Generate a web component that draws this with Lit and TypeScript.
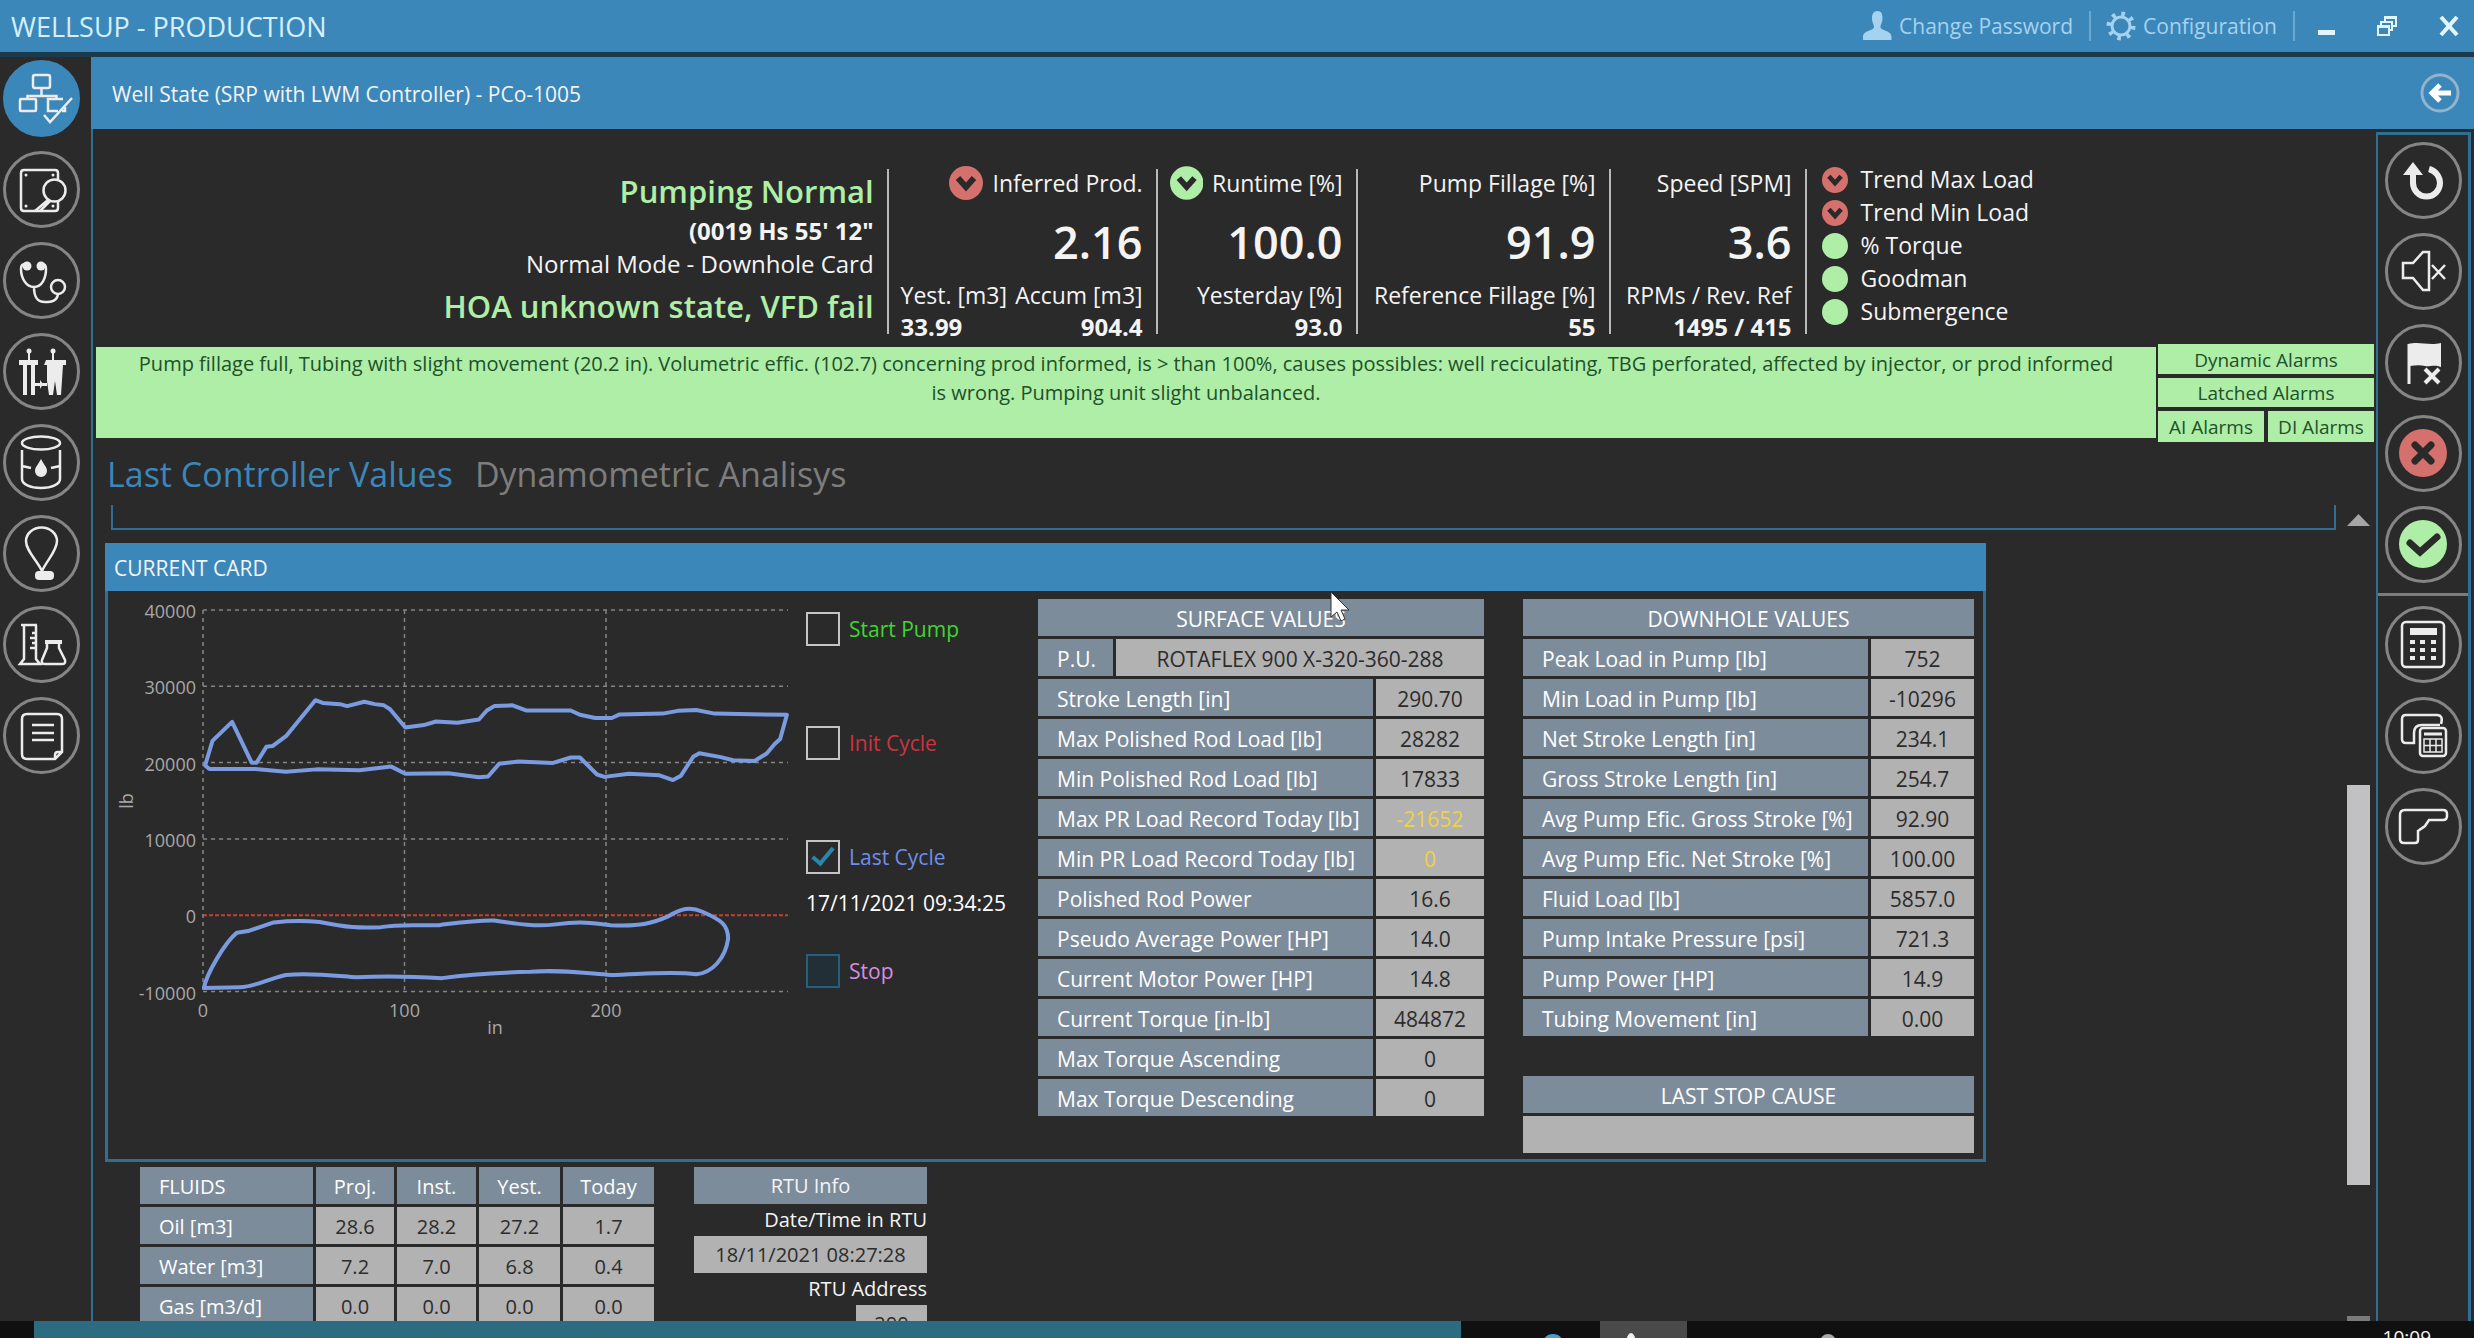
import { LitElement, html, svg, css, TemplateResult } from "lit";
import { customElement } from "lit/decorators.js";
import { classMap } from "lit/directives/class-map.js";

type Icon = { label: string; art: TemplateResult; active?: boolean };
type Row = { label: string; value: string; warn?: boolean };

const NAV: Icon[] = [
  {
    label: "Well state",
    active: true,
    art: svg`<rect x="30" y="15" width="17" height="13" rx="2"/><path d="M38.500 28v8M24.500 39v-3h29v3M38.500 32v4"/>
      <rect x="17" y="39" width="16" height="12" rx="1"/><path d="M60 39H45v12h10M62 47v4h-3"/><path d="M41 55l6 7 22-24"/>`,
  },
  {
    label: "Inspect",
    art: svg`<path d="M55 28v-6q0-3-3-3H21q-3 0-3 3v35q0 3 3 3h31q3 0 3-3v-7"/><circle cx="51.500" cy="39.500" r="11"/>
      <path d="M45 49L32 60M37 60l10-10"/><g class="fill"><circle cx="23" cy="24" r="1.500"/><circle cx="50" cy="24" r="1.500"/><circle cx="23" cy="55" r="1.500"/><circle cx="50" cy="55" r="1.500"/></g>`,
  },
  {
    label: "Diagnosis",
    art: svg`<g class="fill"><circle cx="24" cy="24" r="4.500"/><circle cx="38" cy="24" r="4.500"/></g>
      <path d="M22 22q-4 0-4 5c0 9 5 18 13 18s12-9 12-18q0-5-4-5M31 45c0 10 3 15 11 15 7 0 12-1 13-8"/><circle cx="55" cy="45" r="7"/>`,
  },
  {
    label: "Wells",
    art: svg`<g class="fill"><path d="M16 27h19v5h-3v30h-4V32h-4v30h-4V32h-4zM43 27h20v5h-3l-2 30h-4l-2-14-2 14h-4l-2-14V32h-3z"/>
      <circle cx="26" cy="18" r="2.500"/><circle cx="50" cy="18" r="2.500"/><path d="M25 18h2v9h-2zM49 18h2v28h-2zM32 50h12v3H32zM37 47l3 4-3 5z"/></g>`,
  },
  {
    label: "Tank",
    art: svg`<ellipse cx="38" cy="19" rx="19" ry="6.500"/><path d="M19 26v29c0 5 8 9 19 9s19-4 19-9V26M19 42l9 2M57 42l-9 2"/>
      <path class="fill" d="M38 35c3 6 6 8 6 12a6 6 0 0 1-12 0c0-4 3-6 6-12z"/>`,
  },
  {
    label: "Bulb",
    art: svg`<path d="M39 56C34 45 23 36 23 26a15.500 13.500 0 0 1 31 0c0 10-10 19-15 30z"/><rect class="fill" x="32" y="56" width="19" height="9" rx="4"/>`,
  },
  {
    label: "Laboratory",
    art: svg`<path d="M18 19h16M21 19v34l-4 5h20l-4-5V19M29 27h4M27 32h6M29 37h4M27 42h6M44 37v5l-5 12q-1 4 3 4h17q4 0 3-4l-6-12v-5"/><path class="fill" d="M42 34h17v4H42z"/>`,
  },
  {
    label: "Report",
    art: svg`<path d="M24 17h30q5 0 5 5v33l-7 7H24q-5 0-5-5V22q0-5 5-5zM59 55h-4q-3 0-3 3v4M29 28h22M29 36h22M29 43h22"/>`,
  },
];

const ACTIONS: Icon[] = [
  {
    label: "Refresh",
    art: svg`<path stroke-width="6" d="M44 27c7 2 11 8 11 14a13.500 13.500 0 0 1-27 0V27"/><path class="fill" d="M28 20l10 13H18z"/>`,
  },
  { label: "Mute", art: svg`<path d="M18 30h10l10-11h6v38h-6L28 45H18zM47 32l13 14M60 32L47 46"/>` },
  {
    label: "Clear flag",
    art: svg`<path class="fill" d="M23 20c12-3 20 2 33-1v24c-6-3-12 0-16-1s-9-1-15 0z"/><path stroke-width="3" d="M24 20v40"/><path stroke-width="4" d="M40 45l14 14M54 45L40 59"/>`,
  },
  {
    label: "Reject",
    art: svg`<circle class="red" cx="38" cy="38" r="24"/><path class="cut bold" d="M30 30l16 16M46 30L30 46"/>`,
  },
  {
    label: "Accept",
    art: svg`<circle class="green" cx="38" cy="38" r="24"/><path class="cut bold" d="M25 37l10 9 17-15"/>`,
  },
];

const TOOLS: Icon[] = [
  {
    label: "Calculator",
    art: svg`<rect x="17" y="16" width="42" height="45" rx="4"/><path class="fill" d="M25 22h27v7H25z"/>
      <path class="fill" d="M25 34h5v4h-5zM35 34h5v4h-5zM46 34h5v4h-5zM25 42h5v4h-5zM35 42h5v4h-5zM46 42h5v4h-5zM25 50h5v4h-5zM35 50h5v4h-5zM46 50h5v4h-5z"/>`,
  },
  {
    label: "Card calculator",
    art: svg`<path d="M56 27c2-6 0-9-4-9H21q-4 0-4 4v20q0 4 4 4h8V36q0-8 8-8h18"/><rect x="35" y="31" width="26" height="28" rx="3"/>
      <path d="M39 37h18" stroke-width="3"/><path stroke-width="1.500" d="M39 42h18v13H39zM39 48.500h18M45 42v13M51 42v13"/>`,
  },
  {
    label: "Card shape",
    art: svg`<path d="M20 22h38q4 0 4 4v2q0 4-4 4H44l-4 6-7 5v9q0 3-3 3H19q-4 0-4-4V27q0-5 5-5z"/>`,
  },
];

const SURFACE: Row[] = [
  { label: "Stroke Length [in]", value: "290.70" },
  { label: "Max Polished Rod Load [lb]", value: "28282" },
  { label: "Min Polished Rod Load [lb]", value: "17833" },
  { label: "Max PR Load Record Today [lb]", value: "-21652", warn: true },
  { label: "Min PR Load Record Today [lb]", value: "0", warn: true },
  { label: "Polished Rod Power", value: "16.6" },
  { label: "Pseudo Average Power [HP]", value: "14.0" },
  { label: "Current Motor Power [HP]", value: "14.8" },
  { label: "Current Torque [in-lb]", value: "484872" },
  { label: "Max Torque Ascending", value: "0" },
  { label: "Max Torque Descending", value: "0" },
];

const DOWNHOLE: Row[] = [
  { label: "Peak Load in Pump [lb]", value: "752" },
  { label: "Min Load in Pump [lb]", value: "-10296" },
  { label: "Net Stroke Length [in]", value: "234.1" },
  { label: "Gross Stroke Length [in]", value: "254.7" },
  { label: "Avg Pump Efic. Gross Stroke [%]", value: "92.90" },
  { label: "Avg Pump Efic. Net Stroke [%]", value: "100.00" },
  { label: "Fluid Load [lb]", value: "5857.0" },
  { label: "Pump Intake Pressure [psi]", value: "721.3" },
  { label: "Pump Power [HP]", value: "14.9" },
  { label: "Tubing Movement [in]", value: "0.00" },
];

const FLUIDS = [
  ["Oil [m3]", "28.6", "28.2", "27.2", "1.7"],
  ["Water [m3]", "7.2", "7.0", "6.8", "0.4"],
  ["Gas [m3/d]", "0.0", "0.0", "0.0", "0.0"],
];

const CYCLES = [
  { id: "start", label: "Start Pump", on: false, stamp: "" },
  { id: "init", label: "Init Cycle", on: false, stamp: "" },
  { id: "last", label: "Last Cycle", on: true, stamp: "17/11/2021 09:34:25" },
  { id: "stop", label: "Stop", on: false, stamp: "" },
];

const TRENDS = [
  { label: "Trend Max Load", bad: true },
  { label: "Trend Min Load", bad: true },
  { label: "% Torque", bad: false },
  { label: "Goodman", bad: false },
  { label: "Submergence", bad: false },
];

const mark = (size: number, bad: boolean, arrow = true) => html`<svg
  class="mark"
  width=${size}
  height=${size}
  viewBox="0 0 34 34"
  aria-hidden="true"
>
  <circle class=${bad ? "red" : "green"} cx="17" cy="17" r="17" />
  ${arrow ? svg`<path class="cut" d="M9 12l8 9 8-9"/>` : ""}
</svg>`;

@customElement("dyna-chart")
export class DynaChart extends LitElement {
  static styles = css`
    :host {
      display: block;
    }
    svg {
      display: block;
      width: 690px;
      height: 450px;
    }
    text {
      font: 18px "Open Sans", "Noto Sans", sans-serif;
      fill: #a8a8a8;
    }
    .grid {
      stroke: #858585;
      stroke-width: 1.5;
      stroke-dasharray: 4 4;
      fill: none;
    }
    .zero {
      stroke: #c8402c;
      stroke-width: 2;
      stroke-dasharray: 4 2;
    }
    .curve {
      fill: none;
      stroke: #7a9be0;
      stroke-width: 4;
      stroke-linejoin: round;
      vector-effect: non-scaling-stroke;
    }
  `;

  render() {
    const ys = [40000, 30000, 20000, 10000, 0, -10000];
    const y = (v: number) => 14 + ((40000 - v) / 10000) * 76.3;
    return html`<svg viewBox="0 0 690 450" role="img" aria-label="Dynamometric card">
      ${ys.map(
        (v) => svg`<path class=${v === 0 ? "zero" : "grid"} d="M95 ${y(v)}H680"/>
          <text x="88" y=${y(v) + 8} text-anchor="end">${v}</text>`,
      )}
      ${[0, 100, 200].map(
        (v, i) => svg`<path class="grid" d="M${95 + i * 201.5} 14V396"/>
          <text x=${95 + i * 201.5} y="421" text-anchor="middle">${v}</text>`,
      )}
      <text x="387" y="438" text-anchor="middle">in</text>
      <text transform="translate(25 205) rotate(-90)" text-anchor="middle">lb</text>
      <g transform="translate(-18 -155.600) scale(.6124 .3954)">
        <path
          class="curve"
          d="M188 822L200 760 232 712 264 815 272 815 288 775 298 773 320 748 368 657 380 664 408 667 420 672 448 661 465 667 480 670 490 680 515 726 545 720 565 711 600 714 635 706 648 683 660 672 690 670 712 683 785 683 800 694 825 702 852 702 865 693 935 691 960 684 990 682 1020 691 1060 692 1138 694 1127 755 1118 768 1105 792 1085 811 1050 809 1030 801 995 791 985 800 965 848 952 859 930 847 880 843 840 851 828 845 800 802 785 802 755 816 700 812 668 818 650 850 635 852 585 842 515 843 492 825 440 834 370 832 320 838 270 831 195 831Z"
        />
        <path
          class="curve"
          d="M186 1385C190 1350 220 1270 240 1245L258 1241 300 1219C330 1214 350 1214 375 1218 420 1232 440 1234 475 1231 510 1222 540 1228 570 1226 610 1218 630 1213 660 1214 700 1224 730 1230 760 1224 800 1216 820 1220 850 1226 900 1230 920 1220 945 1203 965 1184 980 1178 1000 1192 1030 1212 1042 1225 1042 1260 1038 1310 1015 1348 990 1350 950 1342 900 1350 850 1352 800 1346 760 1338 720 1344 660 1346 620 1350 575 1360 530 1356 480 1354 435 1358 400 1354 360 1346 320 1352 290 1362 270 1382 245 1383Z"
        />
      </g>
    </svg>`;
  }
}

@customElement("app-root")
export class AppRoot extends LitElement {
  static styles = css`
    :host {
      display: block;
      --blue: #3c87b9;
      --line: #2f6f93;
      --bg: #2a2a2b;
      --green: #aeeea6;
      --red: #d4716c;
      --slate: #7d8c9b;
      --grey: #b2b2b2;
      font-family: "Open Sans", "Noto Sans", sans-serif;
      font-size: 21px;
      color: #f4f4f4;
    }
    * {
      box-sizing: border-box;
    }
    button {
      font: inherit;
      color: inherit;
      background: none;
      border: 0;
      padding: 0;
    }
    svg {
      display: block;
    }
    .fill {
      fill: currentColor;
      stroke: none;
    }
    .red {
      fill: var(--red);
      stroke: none;
    }
    .green {
      fill: var(--green);
      stroke: none;
    }
    .cut {
      fill: none;
      stroke: #2a2a2b;
      stroke-width: 6;
    }
    .cut.bold {
      stroke-width: 7;
      stroke-linecap: round;
    }
    .page {
      position: relative;
      display: flex;
      flex-direction: column;
      height: 100vh;
      overflow: hidden;
      background: var(--bg);
    }

    /* title bar */
    .titlebar {
      display: flex;
      align-items: center;
      flex: none;
      height: 57px;
      padding: 0 15px 0 11px;
      background: var(--blue);
      border-bottom: 5px solid #1b3a4b;
    }
    .brand {
      flex: 1;
      font-size: 27px;
      font-weight: 400;
      margin: 0;
      color: #d5effc;
    }
    .tool {
      display: flex;
      align-items: center;
      gap: 7px;
      color: #a5d2ee;
      padding-right: 16px;
      border-right: 2px solid #6aa8d0;
      line-height: 28px;
      margin-right: 15px;
    }
    .win {
      display: flex;
      align-items: center;
      gap: 42px;
      margin-left: 8px;
      color: #e4f4fd;
    }

    /* navigation and action circles */
    .work {
      flex: 1;
      min-height: 0;
      display: grid;
      grid-template-columns: 91px minmax(0, 1fr);
    }
    .nav {
      display: flex;
      flex-direction: column;
      gap: 14px;
      padding: 3px;
    }
    .circle {
      flex: none;
      width: 77px;
      height: 77px;
      border: 3px solid #858585;
      border-radius: 50%;
      color: #ececec;
    }
    .circle svg {
      width: 77px;
      height: 77px;
      margin: -3px;
      fill: none;
      stroke: currentColor;
      stroke-width: 2.5;
    }
    .circle.active {
      background: var(--blue);
      border-color: var(--blue);
    }
    .main {
      display: flex;
      flex-direction: column;
      min-height: 0;
    }
    .head {
      display: flex;
      flex: none;
      align-items: center;
      justify-content: space-between;
      height: 72px;
      padding: 0 14px 0 21px;
      background: var(--blue);
    }
    .head h1 {
      font-size: 21px;
      font-weight: 400;
      margin: 0;
      padding-top: 2px;
    }
    .body {
      flex: 1;
      min-height: 0;
      display: grid;
      grid-template-columns: minmax(0, 1fr) 98px;
      border-left: 2px solid var(--line);
    }
    .rail {
      border: 2px solid var(--line);
      border-width: 3px 3px 0 2px;
      margin: 3px 3px 0 0;
    }
    .group {
      display: flex;
      flex-direction: column;
      align-items: center;
      gap: 14px;
      padding: 7px 0 10px;
    }
    .group + .group {
      border-top: 3px solid #7c7c7c;
      padding-top: 10px;
    }
    .content {
      display: flex;
      flex-direction: column;
      min-height: 0;
    }

    /* status */
    .status {
      display: grid;
      flex: none;
      grid-template-columns: 25fr 269px 200px 253px 196px 18fr;
      height: 215px;
      padding-top: 40px;
    }
    .state {
      text-align: right;
      padding-right: 13px;
      white-space: nowrap;
    }
    .state p,
    .metric p {
      margin: 0;
    }
    .state .big {
      font-size: 31px;
      font-weight: 600;
      line-height: 44px;
      color: var(--green);
    }
    .state .time {
      font-size: 24px;
      font-weight: 700;
      line-height: 36px;
    }
    .state .mode {
      font-size: 24px;
      line-height: 30px;
    }
    .state .big.hoa {
      line-height: 54px;
    }
    .metric {
      height: 165px;
      border-left: 2px solid #b9b9b9;
      padding: 0 13px 0 12px;
      text-align: right;
      font-size: 23px;
      line-height: 32px;
      white-space: nowrap;
    }
    .metric .title {
      display: flex;
      justify-content: flex-end;
      align-items: center;
      gap: 9px;
      line-height: 30px;
      height: 28px;
    }
    .metric .number {
      font-size: 45px;
      font-weight: 600;
      height: 82px;
      line-height: 90px;
    }
    .metric strong {
      display: block;
      font-size: 24px;
    }
    .pair {
      display: flex;
      justify-content: space-between;
    }
    .pair div:first-child {
      text-align: left;
    }
    .trends {
      list-style: none;
      margin: 0;
      padding: 0 0 0 15px;
      height: 165px;
      border-left: 2px solid #b9b9b9;
      font-size: 23px;
      line-height: 33px;
    }
    .trends li {
      display: flex;
      align-items: center;
      gap: 13px;
      margin: -6px 0 6px;
    }

    /* alarms */
    .alarms {
      display: grid;
      flex: none;
      grid-template-columns: minmax(0, 1fr) 216px;
      gap: 2px;
      height: 98px;
      padding: 0 2px 0 3px;
      color: #21502a;
    }
    .banner {
      margin: 3px 0 4px;
      padding: 2px 38px;
      background: var(--green);
      text-align: center;
      font-size: 20px;
      line-height: 29px;
    }
    .keys {
      display: grid;
      grid-template-columns: 1fr 1fr;
      grid-template-rows: 30px 29px 31px;
      gap: 4px;
      font-size: 19px;
    }
    .keys button {
      background: var(--green);
      line-height: 28px;
      padding-top: 1px;
    }
    .wide {
      grid-column: 1 / 3;
    }

    .tabs {
      display: flex;
      flex: none;
      gap: 22px;
      height: 63px;
      padding: 8px 0 0 14px;
      font-size: 34px;
      line-height: 48px;
      color: #7d7d7d;
    }
    .tabs button {
      height: 48px;
    }
    .tabs .on {
      color: var(--blue);
    }

    /* scrolled sheet */
    .sheet {
      flex: 1;
      min-height: 0;
      display: grid;
      grid-template-columns: minmax(0, 1fr) 33px;
    }
    .scroll {
      overflow: hidden;
    }
    .stub {
      height: 25px;
      margin: 0 7px 0 18px;
      border: 2px solid var(--line);
      border-top: 0;
    }
    .card {
      width: max-content;
      margin: 13px 0 0 12px;
      border: 3px solid var(--line);
      border-top: 0;
    }
    .card h2 {
      margin: 0 -3px;
      padding-left: 9px;
      height: 48px;
      font-size: 21px;
      font-weight: 400;
      line-height: 50px;
      background: var(--blue);
    }
    .columns {
      display: flex;
      padding: 5px 9px 3px 0;
    }
    .checks {
      display: flex;
      flex-direction: column;
      gap: 80px;
      width: 206px;
      margin: 16px 26px 0 8px;
      white-space: nowrap;
    }
    .check {
      height: 34px;
    }
    .check label {
      display: flex;
      align-items: center;
      gap: 9px;
      height: 34px;
    }
    .check input {
      appearance: none;
      width: 34px;
      height: 34px;
      margin: 0;
      border: 2px solid #c4c4c4;
      background: var(--bg);
      display: grid;
      place-items: center;
    }
    .check input:checked::before {
      content: "";
      width: 8px;
      height: 18px;
      border: solid #2a86ad;
      border-width: 0 4px 4px 0;
      rotate: 40deg;
      translate: 0 -3px;
    }
    .check.start {
      color: #3fd62f;
    }
    .check.init {
      color: #cf3340;
    }
    .check.last {
      color: #6f8fe6;
    }
    .check.stop {
      color: #d98be0;
    }
    .check.stop input {
      border-color: #22627d;
      background: #232f36;
    }
    .check time {
      display: block;
      color: #fff;
      line-height: 24px;
      padding-top: 17px;
    }
    table {
      border-collapse: separate;
      border-spacing: 3px;
      margin: 0 -3px;
      table-layout: fixed;
    }
    th,
    td {
      height: 37px;
      padding: 0;
      line-height: 34px;
      padding-top: 3px;
      font-weight: 400;
      white-space: nowrap;
    }
    th {
      background: var(--slate);
      color: #fff;
    }
    th[scope="row"] {
      text-align: left;
      padding-left: 19px;
    }
    td {
      background: var(--grey);
      color: #2c2c2c;
      text-align: center;
    }
    td.warn {
      color: #f0d242;
    }
    .surface {
      width: 452px;
    }
    .downhole {
      width: 457px;
    }
    .second {
      margin-left: 39px;
    }
    .cause {
      margin-top: 34px;
    }
    .lower {
      display: flex;
      align-items: flex-start;
      gap: 40px;
      padding: 2px 0 0 47px;
    }
    .fluids {
      width: 520px;
      font-size: 20px;
    }
    .rtu {
      width: 233px;
      margin-top: 3px;
      text-align: right;
    }
    .rtu h3,
    .rtu output {
      display: block;
      margin: 0;
      height: 37px;
      line-height: 37px;
      font-size: 20px;
      font-weight: 400;
      text-align: center;
      background: var(--slate);
    }
    .rtu label {
      display: block;
      font-size: 20px;
      line-height: 32px;
      height: 32px;
    }
    .rtu output {
      background: var(--grey);
      color: #2c2c2c;
    }
    .rtu .addr {
      width: 71px;
      margin-left: auto;
    }
    .bar {
      display: flex;
      flex-direction: column;
      padding: 9px 6px 0 4px;
    }
    .up {
      height: 12px;
      background: #a5a5a5;
      clip-path: polygon(50% 0, 100% 100%, 0 100%);
    }
    .before {
      flex: 259;
    }
    .thumb {
      flex: 400;
      background: #c1c1c3;
    }
    .after {
      flex: 131;
    }
    .down {
      height: 5px;
      background: #7a7a7a;
    }

    /* taskbar */
    .taskbar {
      display: grid;
      grid-template-columns: 34px 1427px 139px 87px 1fr auto;
      flex: none;
      height: 17px;
      overflow: hidden;
      background: #101011;
    }
    .teal {
      background: #2d6b80;
    }
    .slot {
      overflow: hidden;
    }
    .slot.lit {
      background: #4a4a4a;
    }
    .peek {
      width: 22px;
      height: 22px;
      border-radius: 50%;
      margin: 13px 0 0 81px;
      background: #3fa4dc;
    }
    .lit .peek {
      width: 10px;
      margin: 12px 0 0 26px;
      background: #f0f0f0;
    }
    .far {
      width: 18px;
      margin: 13px 0 0 132px;
      background: #aaa;
    }
    .clock {
      padding-right: 43px;
      font-size: 19px;
      line-height: 32px;
      height: 32px;
    }
    .cursor {
      position: absolute;
      left: 1330px;
      top: 591px;
    }
  `;

  private circle(i: Icon) {
    return html`<button class=${classMap({ circle: true, active: !!i.active })} aria-label=${i.label}>
      <svg viewBox="0 0 77 77" aria-hidden="true">${i.art}</svg>
    </button>`;
  }

  private row(r: Row, span = 1) {
    return html`<tr>
      <th scope="row" colspan=${span}>${r.label}</th>
      <td class=${classMap({ warn: !!r.warn })}>${r.value}</td>
    </tr>`;
  }

  render() {
    return html`<div class="page">
      <header class="titlebar">
        <p class="brand">WELLSUP - PRODUCTION</p>
        <button class="tool">
          <svg width="29" height="30" viewBox="0 0 29 30" aria-hidden="true">
            <path class="fill" d="M14.500 0c4 0 5 3 5 7 0 5-2 6-2 9 0 4 11 3 11 10v3H0v-3c0-7 11-6 11-10 0-3-2-4-2-9 0-4 1.500-7 5.500-7z" />
          </svg>
          Change Password
        </button>
        <button class="tool">
          <svg width="30" height="30" viewBox="0 0 30 30" fill="none" stroke="currentColor" aria-hidden="true">
            <circle cx="15" cy="15" r="9" stroke-width="3" />
            <circle cx="15" cy="15" r="12" stroke-width="5" stroke-dasharray="3.500 5.920" />
          </svg>
          Configuration
        </button>
        <div class="win">
          <button aria-label="Minimize">
            <svg width="17" height="20" viewBox="0 0 17 20"><path class="fill" d="M0 14h17v5H0z" /></svg>
          </button>
          <button aria-label="Restore">
            <svg width="20" height="20" viewBox="0 0 20 20" fill="none" stroke="currentColor" stroke-width="2">
              <path d="M1 10h11v9H1zM4 10V6h11v8h-3M8 6V1h11v9h-4M1 11h11M8 2h11" />
            </svg>
          </button>
          <button aria-label="Close">
            <svg width="20" height="20" viewBox="0 0 20 20" fill="none" stroke="currentColor" stroke-width="4">
              <path d="M2 1l16 18M18 1L2 19" />
            </svg>
          </button>
        </div>
      </header>

      <div class="work">
        <nav class="nav">${NAV.map((i) => this.circle(i))}</nav>
        <main class="main">
          <div class="head">
            <h1>Well State (SRP with LWM Controller) - PCo-1005</h1>
            <button aria-label="Back">
              <svg width="40" height="40" viewBox="0 0 40 40" fill="none">
                <circle cx="20" cy="20" r="18" stroke="#8fb4cc" stroke-width="3" />
                <path d="M31 20H13M20 12l-8 8 8 8" stroke="#fff" stroke-width="5" />
              </svg>
            </button>
          </div>
          <div class="body">
            <div class="content">
              ${this.status()}
              <section class="alarms">
                <p class="banner">
                  Pump fillage full, Tubing with slight movement (20.2 in). Volumetric effic. (102.7) concerning prod
                  informed, is > than 100%, causes possibles: well reciculating, TBG perforated, affected by injector,
                  or prod informed is wrong. Pumping unit slight unbalanced.
                </p>
                <div class="keys">
                  <button class="wide">Dynamic Alarms</button>
                  <button class="wide">Latched Alarms</button>
                  <button>AI Alarms</button>
                  <button>DI Alarms</button>
                </div>
              </section>
              <div class="tabs">
                <button class="on">Last Controller Values</button>
                <button>Dynamometric Analisys</button>
              </div>
              <div class="sheet">
                <div class="scroll">
                  <div class="stub"></div>
                  ${this.card()} ${this.lower()}
                </div>
                <div class="bar">
                  <div class="up"></div>
                  <div class="before"></div>
                  <div class="thumb"></div>
                  <div class="after"></div>
                  <div class="down"></div>
                </div>
              </div>
            </div>
            <aside class="rail">
              <div class="group">${ACTIONS.map((i) => this.circle(i))}</div>
              <div class="group">${TOOLS.map((i) => this.circle(i))}</div>
            </aside>
          </div>
        </main>
      </div>

      <footer class="taskbar">
        <div></div>
        <div class="teal"></div>
        <div class="slot"><div class="peek"></div></div>
        <div class="slot lit"><div class="peek"></div></div>
        <div class="slot"><div class="peek far"></div></div>
        <div class="clock">10:09</div>
      </footer>
      <svg class="cursor" width="20" height="32" viewBox="0 0 20 32" aria-hidden="true">
        <path d="M1 1v25l6-5 4 9 4-2-4-9h8z" fill="#fff" stroke="#333" />
      </svg>
    </div>`;
  }

  private status() {
    return html`<section class="status">
      <div class="state">
        <p class="big">Pumping Normal</p>
        <p class="time">(0019 Hs 55' 12"</p>
        <p class="mode">Normal Mode - Downhole Card</p>
        <p class="big hoa">HOA unknown state, VFD fail</p>
      </div>
      <div class="metric">
        <p class="title">${mark(34, true)} Inferred Prod.</p>
        <p class="number">2.16</p>
        <div class="pair">
          <div>Yest. [m3]<strong>33.99</strong></div>
          <div>Accum [m3]<strong>904.4</strong></div>
        </div>
      </div>
      <div class="metric">
        <p class="title">${mark(34, false)} Runtime [%]</p>
        <p class="number">100.0</p>
        <div>Yesterday [%]<strong>93.0</strong></div>
      </div>
      <div class="metric">
        <p class="title">Pump Fillage [%]</p>
        <p class="number">91.9</p>
        <div>Reference Fillage [%]<strong>55</strong></div>
      </div>
      <div class="metric">
        <p class="title">Speed [SPM]</p>
        <p class="number">3.6</p>
        <div>RPMs / Rev. Ref<strong>1495 / 415</strong></div>
      </div>
      <ul class="trends">
        ${TRENDS.map((t) => html`<li>${mark(26, t.bad, t.bad)}${t.label}</li>`)}
      </ul>
    </section>`;
  }

  private card() {
    return html`<section class="card">
      <h2>CURRENT CARD</h2>
      <div class="columns">
        <dyna-chart></dyna-chart>
        <div class="checks">
          ${CYCLES.map(
            (c) => html`<div class="check ${c.id}">
              <label><input type="checkbox" .checked=${c.on} />${c.label}</label>
              ${c.stamp ? html`<time>${c.stamp}</time>` : ""}
            </div>`,
          )}
        </div>
        <div>
          <table class="surface">
            <colgroup>
              <col style="width:75px" />
              <col />
              <col style="width:108px" />
            </colgroup>
            <tr>
              <th colspan="3">SURFACE VALUES</th>
            </tr>
            <tr>
              <th scope="row">P.U.</th>
              <td colspan="2">ROTAFLEX 900 X-320-360-288</td>
            </tr>
            ${SURFACE.map((r) => this.row(r, 2))}
          </table>
        </div>
        <div class="second">
          <table class="downhole">
            <colgroup>
              <col />
              <col style="width:103px" />
            </colgroup>
            <tr>
              <th colspan="2">DOWNHOLE VALUES</th>
            </tr>
            ${DOWNHOLE.map((r) => this.row(r))}
          </table>
          <table class="downhole cause">
            <tr>
              <th>LAST STOP CAUSE</th>
            </tr>
            <tr>
              <td></td>
            </tr>
          </table>
        </div>
      </div>
    </section>`;
  }

  private lower() {
    return html`<div class="lower">
      <table class="fluids">
        <colgroup>
          <col style="width:173px" />
          <col style="width:78px" />
          <col style="width:79px" />
          <col style="width:81px" />
          <col />
        </colgroup>
        <tr>
          <th scope="row">FLUIDS</th>
          <th>Proj.</th>
          <th>Inst.</th>
          <th>Yest.</th>
          <th>Today</th>
        </tr>
        ${FLUIDS.map(
          ([name, ...cells]) => html`<tr>
            <th scope="row">${name}</th>
            ${cells.map((c) => html`<td>${c}</td>`)}
          </tr>`,
        )}
      </table>
      <div class="rtu">
        <h3>RTU Info</h3>
        <label for="clock">Date/Time in RTU</label>
        <output id="clock">18/11/2021 08:27:28</output>
        <label for="addr">RTU Address</label>
        <output id="addr" class="addr">200</output>
      </div>
    </div>`;
  }
}
